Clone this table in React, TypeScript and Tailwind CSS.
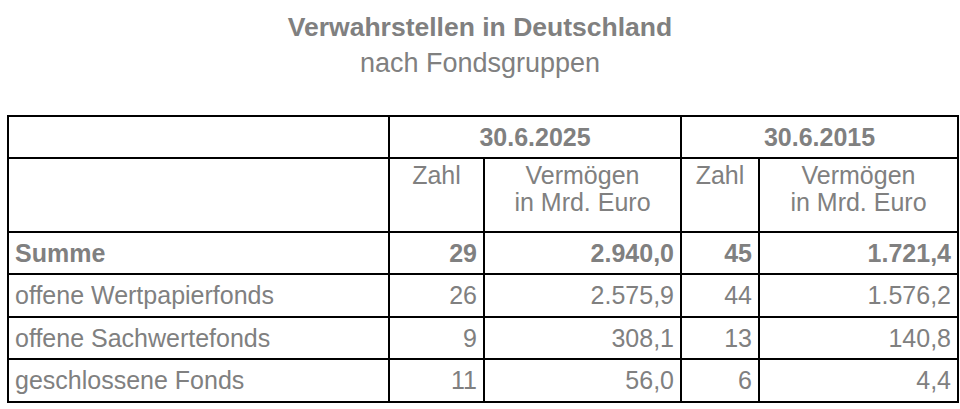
import React from 'react'

const rows = [
  { name: 'Summe', a: '29', b: '2.940,0', c: '45', d: '1.721,4', bold: true },
  { name: 'offene Wertpapierfonds', a: '26', b: '2.575,9', c: '44', d: '1.576,2' },
  { name: 'offene Sachwertefonds', a: '9', b: '308,1', c: '13', d: '140,8' },
  { name: 'geschlossene Fonds', a: '11', b: '56,0', c: '6', d: '4,4' },
]

const heights = ['h-[42px]', 'h-[43px]', 'h-[42px]', 'h-[43px]']

export default function App() {
  const cell = 'border-2 border-black px-[6px]'
  return (
    <div className="w-[960px] h-[409px] bg-white text-[#808080] font-['Liberation_Sans',Arial,sans-serif]">
      <div className="pt-[13px] flex flex-col items-center">
        <h1 className="text-[26.5px] leading-[28px] font-bold">Verwahrstellen in Deutschland</h1>
        <p className="mt-[7px] text-[27px] leading-[30px]">nach Fondsgruppen</p>
      </div>
      <div className="pl-[7px] mt-[37px]">
        <table className="w-[950px] table-fixed border-collapse text-[25px] leading-[27px]">
          <colgroup>
            <col className="w-[381px]" />
            <col className="w-[95px]" />
            <col className="w-[197px]" />
            <col className="w-[78px]" />
            <col className="w-[199px]" />
          </colgroup>
          <thead>
            <tr className="h-[42px]">
              <th className={cell}></th>
              <th colSpan={2} className={cell + ' font-bold text-center'}>30.6.2025</th>
              <th colSpan={2} className={cell + ' font-bold text-center'}>30.6.2015</th>
            </tr>
            <tr className="h-[74px]">
              <th className={cell}></th>
              <th className={cell + ' font-normal text-center align-top pt-[3px]'}>Zahl</th>
              <th className={cell + ' font-normal text-center align-top pt-[3px]'}>
                Vermögen
                <br />
                in Mrd. Euro
              </th>
              <th className={cell + ' font-normal text-center align-top pt-[3px]'}>Zahl</th>
              <th className={cell + ' font-normal text-center align-top pt-[3px]'}>
                Vermögen
                <br />
                in Mrd. Euro
              </th>
            </tr>
          </thead>
          <tbody>
            {rows.map((r, i) => (
              <tr key={r.name} className={heights[i] + (r.bold ? ' font-bold' : '')}>
                <td className={cell + ' text-left'}>{r.name}</td>
                <td className={cell + ' text-right'}>{r.a}</td>
                <td className={cell + ' text-right'}>{r.b}</td>
                <td className={cell + ' text-right'}>{r.c}</td>
                <td className={cell + ' text-right'}>{r.d}</td>
              </tr>
            ))}
          </tbody>
        </table>
      </div>
    </div>
  )
}
